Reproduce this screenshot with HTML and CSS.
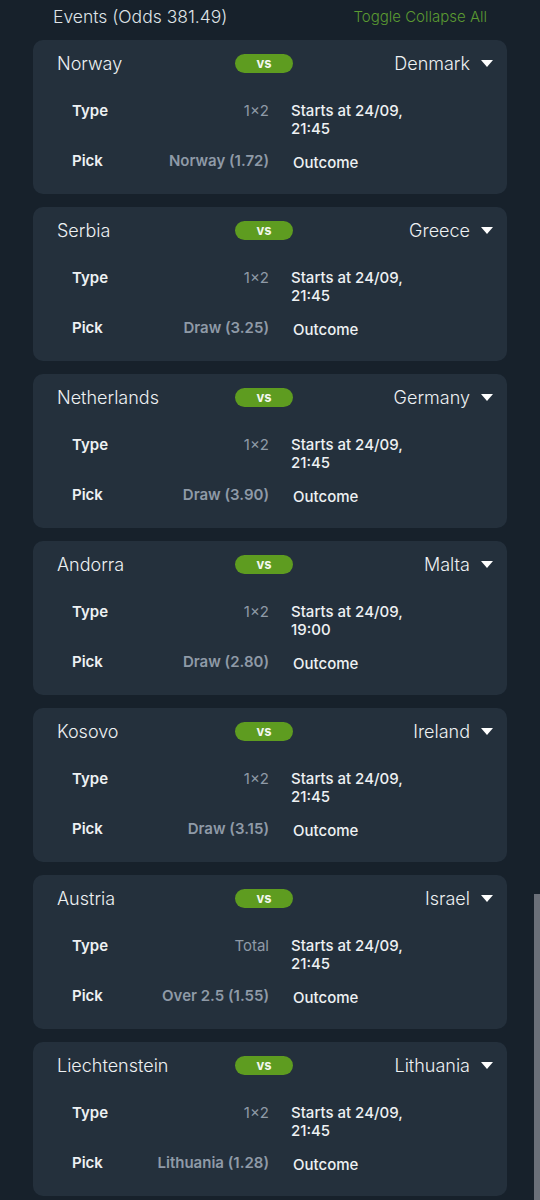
FILE: index.html
```html
<!DOCTYPE html>
<html lang="en">
<head>
    <meta charset="UTF-8">
    <meta name="viewport" content="width=device-width, initial-scale=1.0">
    <title>Events</title>
    <link rel="stylesheet" href="styles.css">
</head>
<body>
    <div class="events">
        <div class="events-header">
            <span class="events-title">Events (Odds 381.49)</span>
            <span class="toggle-all">Toggle Collapse All</span>
        </div>

        <div class="event-card">
            <div class="teams">
                <span class="team home">Norway</span>
                <span class="vs">vs</span>
                <span class="team away">Denmark</span>
                <svg class="caret" viewBox="0 0 12 7"><path d="M0 0 L12 0 L6 7 Z" fill="#fff"/></svg>
            </div>
            <div class="details">
                <span class="label">Type</span><span class="value type">1×2</span><span class="info">Starts at 24/09, 21:45</span>
                <span class="label">Pick</span><span class="value pick">Norway (1.72)</span><span class="info outcome">Outcome</span>
            </div>
        </div>

        <div class="event-card">
            <div class="teams">
                <span class="team home">Serbia</span>
                <span class="vs">vs</span>
                <span class="team away">Greece</span>
                <svg class="caret" viewBox="0 0 12 7"><path d="M0 0 L12 0 L6 7 Z" fill="#fff"/></svg>
            </div>
            <div class="details">
                <span class="label">Type</span><span class="value type">1×2</span><span class="info">Starts at 24/09, 21:45</span>
                <span class="label">Pick</span><span class="value pick">Draw (3.25)</span><span class="info outcome">Outcome</span>
            </div>
        </div>

        <div class="event-card">
            <div class="teams">
                <span class="team home">Netherlands</span>
                <span class="vs">vs</span>
                <span class="team away">Germany</span>
                <svg class="caret" viewBox="0 0 12 7"><path d="M0 0 L12 0 L6 7 Z" fill="#fff"/></svg>
            </div>
            <div class="details">
                <span class="label">Type</span><span class="value type">1×2</span><span class="info">Starts at 24/09, 21:45</span>
                <span class="label">Pick</span><span class="value pick">Draw (3.90)</span><span class="info outcome">Outcome</span>
            </div>
        </div>

        <div class="event-card">
            <div class="teams">
                <span class="team home">Andorra</span>
                <span class="vs">vs</span>
                <span class="team away">Malta</span>
                <svg class="caret" viewBox="0 0 12 7"><path d="M0 0 L12 0 L6 7 Z" fill="#fff"/></svg>
            </div>
            <div class="details">
                <span class="label">Type</span><span class="value type">1×2</span><span class="info">Starts at 24/09, 19:00</span>
                <span class="label">Pick</span><span class="value pick">Draw (2.80)</span><span class="info outcome">Outcome</span>
            </div>
        </div>

        <div class="event-card">
            <div class="teams">
                <span class="team home">Kosovo</span>
                <span class="vs">vs</span>
                <span class="team away">Ireland</span>
                <svg class="caret" viewBox="0 0 12 7"><path d="M0 0 L12 0 L6 7 Z" fill="#fff"/></svg>
            </div>
            <div class="details">
                <span class="label">Type</span><span class="value type">1×2</span><span class="info">Starts at 24/09, 21:45</span>
                <span class="label">Pick</span><span class="value pick">Draw (3.15)</span><span class="info outcome">Outcome</span>
            </div>
        </div>

        <div class="event-card">
            <div class="teams">
                <span class="team home">Austria</span>
                <span class="vs">vs</span>
                <span class="team away">Israel</span>
                <svg class="caret" viewBox="0 0 12 7"><path d="M0 0 L12 0 L6 7 Z" fill="#fff"/></svg>
            </div>
            <div class="details">
                <span class="label">Type</span><span class="value type">Total</span><span class="info">Starts at 24/09, 21:45</span>
                <span class="label">Pick</span><span class="value pick">Over 2.5 (1.55)</span><span class="info outcome">Outcome</span>
            </div>
        </div>

        <div class="event-card">
            <div class="teams">
                <span class="team home">Liechtenstein</span>
                <span class="vs">vs</span>
                <span class="team away">Lithuania</span>
                <svg class="caret" viewBox="0 0 12 7"><path d="M0 0 L12 0 L6 7 Z" fill="#fff"/></svg>
            </div>
            <div class="details">
                <span class="label">Type</span><span class="value type">1×2</span><span class="info">Starts at 24/09, 21:45</span>
                <span class="label">Pick</span><span class="value pick">Lithuania (1.28)</span><span class="info outcome">Outcome</span>
            </div>
        </div>
    </div>

    <!-- scrollbar thumb from the original capture -->
    <div class="scroll-thumb"></div>
</body>
</html>
```

FILE: styles.css
```css
body {
    margin: 0;
    background: #17212b;
    font-family: 'Inter', 'Noto Sans', sans-serif;
    color: #e8ebee;
    overflow: hidden;
    height: 1200px;
}
.events {
    padding: 0 33px;
}
.events-header {
    display: flex;
    justify-content: space-between;
    align-items: center;
    height: 32px;
    padding: 0 20px;
    margin-bottom: 8px;
}
.events-title {
    font-size: 17.5px;
    font-weight: 300;
    color: #dfe3e7;
}
.toggle-all {
    font-size: 15px;
    font-weight: 300;
    color: #5b9a32;
}
.event-card {
    background: #24303c;
    border-radius: 10px;
    padding: 12px 14px 24px 24px;
    margin-bottom: 13px;
    box-sizing: border-box;
    height: 154px;
}
.teams {
    display: grid;
    grid-template-columns: 1fr 58px 1fr 12px;
    align-items: center;
    height: 22px;
}
.team {
    font-size: 18px;
    font-weight: 300;
    color: #eef1f3;
}
.team.away {
    text-align: right;
    padding-right: 11px;
}
.vs {
    background: #5e9c20;
    border-radius: 10px;
    height: 19px;
    line-height: 19px;
    text-align: center;
    font-size: 13px;
    font-weight: 700;
    color: #f2f6ee;
    margin-left: -5px;
    margin-right: 5px;
}
.caret {
    width: 12px;
    height: 7px;
    display: block;
}
.details {
    display: grid;
    grid-template-columns: 50px 125px 130px;
    column-gap: 22px;
    row-gap: 15px;
    margin-top: 28px;
    padding-left: 15px;
    font-size: 15px;
    line-height: 17.5px;
}
.label {
    font-weight: 600;
    color: #eef1f3;
}
.value {
    text-align: right;
    color: #8f9aa7;
    white-space: nowrap;
}
.value.type {
    font-weight: 400;
}
.value.pick {
    font-weight: 600;
}
.info {
    font-weight: 500;
    color: #eef1f3;
}
.info.outcome {
    padding-top: 2px;
    padding-left: 2px;
}
.scroll-thumb {
    position: fixed;
    right: 0;
    top: 894px;
    width: 6px;
    height: 306px;
    background: #6b7079;
}
```
